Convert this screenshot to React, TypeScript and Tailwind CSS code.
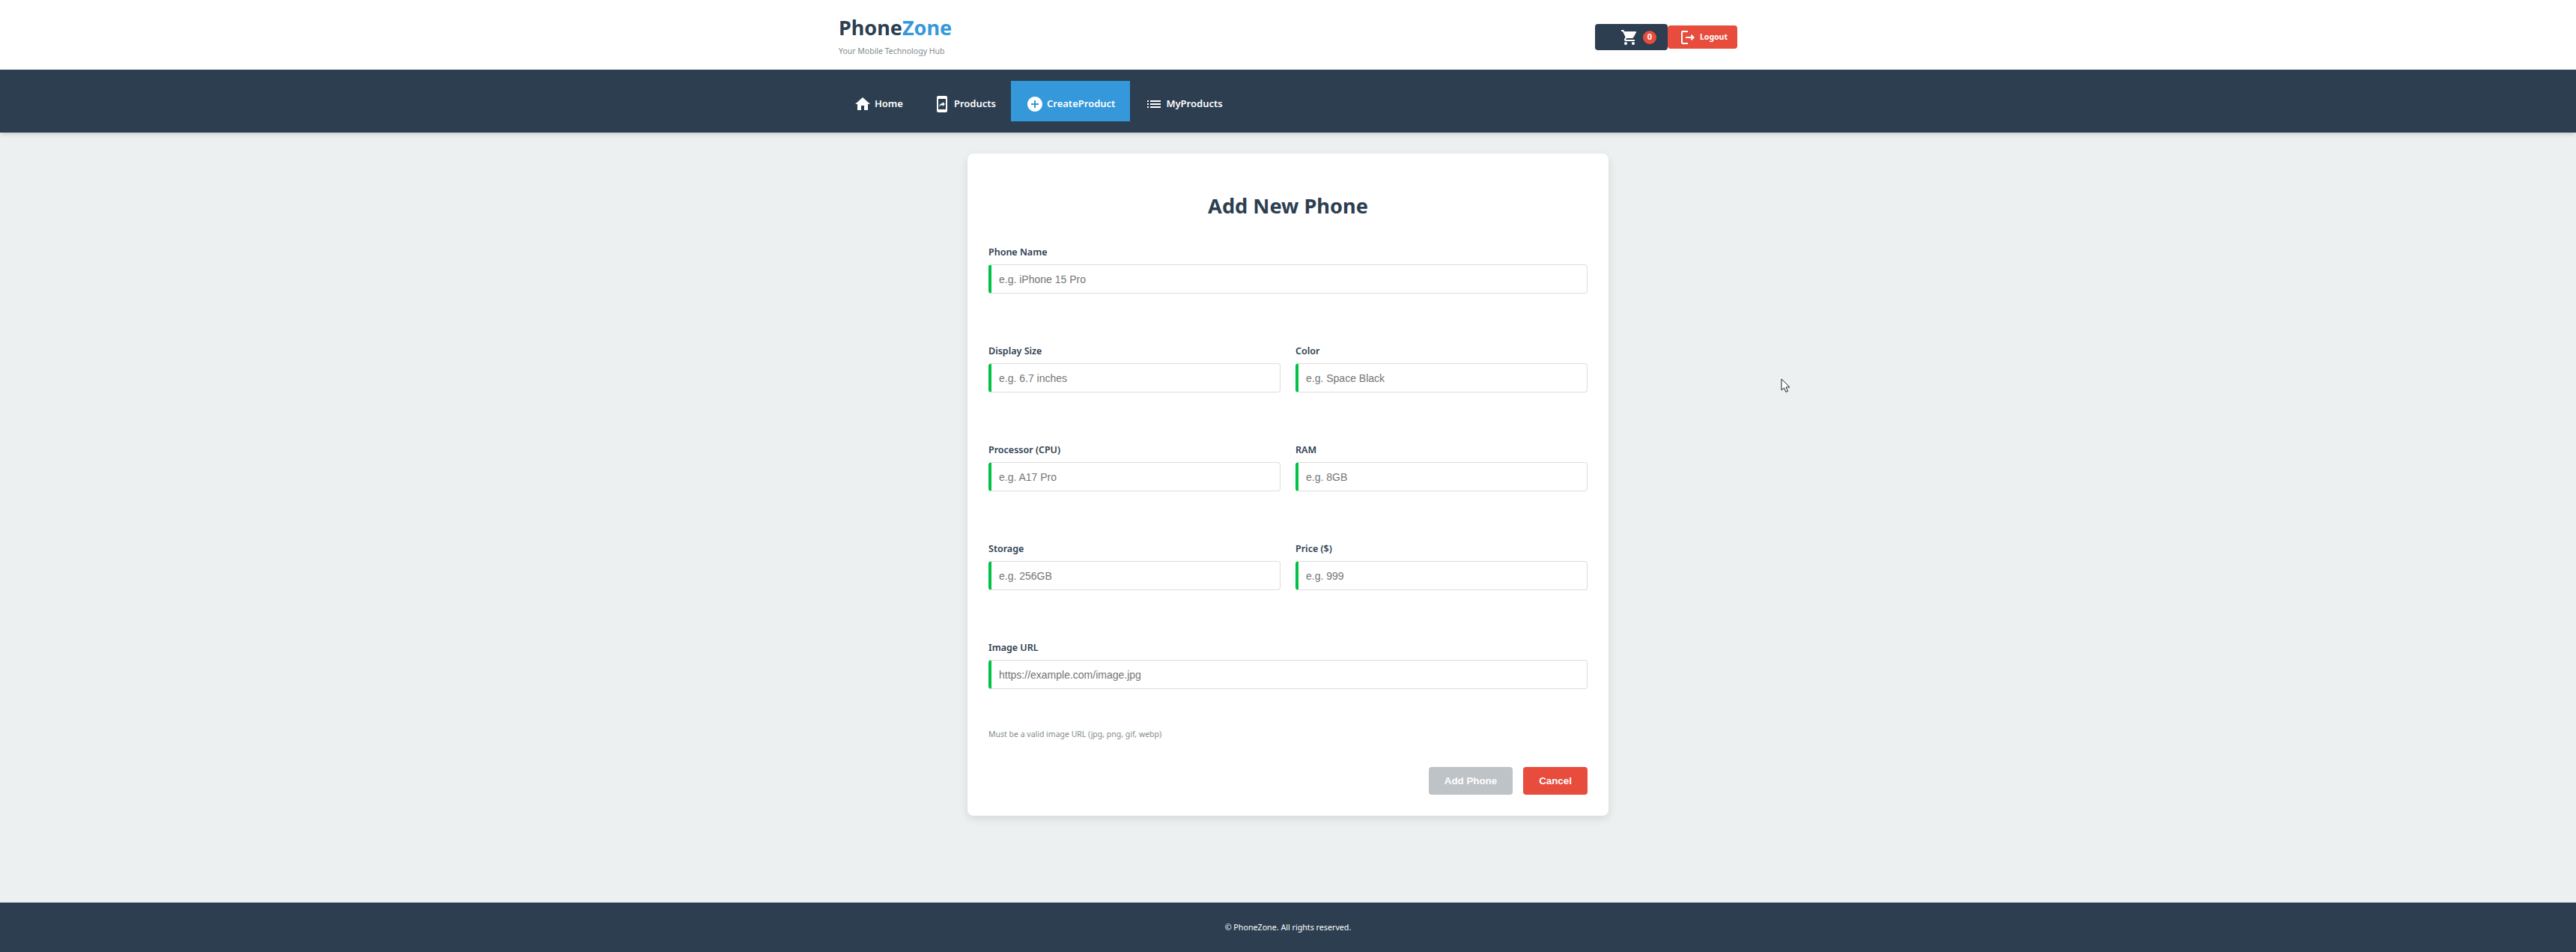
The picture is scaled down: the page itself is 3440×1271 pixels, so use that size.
import { MdAddCircle, MdHome, MdList, MdMobileScreenShare, MdOutlineLogout, MdShoppingCart } from "react-icons/md";

const uiFont = "font-['Noto_Sans','Open_Sans',sans-serif]";

function Field({ label, placeholder }: { label: string; placeholder: string }) {
  return (
    <div className="flex flex-1 flex-col">
      <label className="mb-[6px] text-[12.5px] font-semibold leading-[20px] text-[#2c3e50]">{label}</label>
      <input
        placeholder={placeholder}
        className="h-[39px] w-full rounded-[4px] border border-l-[4px] border-[#dddddd] border-l-[#00c244] bg-white px-[10px] font-['Liberation_Sans',sans-serif] text-[14px] outline-none placeholder:text-[#757575]"
      />
    </div>
  );
}

function NavItem({ icon, label, active }: { icon: React.ReactNode; label: string; active?: boolean }) {
  return (
    <a className={`flex h-[54px] items-center gap-[4px] px-[20px] pt-[8px] text-[13px] font-semibold text-white ${active ? "bg-[#3498db]" : ""}`}>
      {icon}
      {label}
    </a>
  );
}

export default function App() {
  return (
    <div className={`relative flex h-screen flex-col bg-[#ecf0f1] ${uiFont}`}>
      {/* Header */}
      <header className="h-[93px] bg-white">
        <div className="mx-auto flex h-full w-[1200px] items-center justify-between">
          <div>
            <h1 className="text-[27px] font-bold leading-[38px] text-[#2c3e50]">
              Phone<span className="text-[#3498db]">Zone</span>
            </h1>
            <p className="mt-[5px] text-[10.5px] leading-[14px] text-[#7f8c8d]">Your Mobile Technology Hub</p>
          </div>
          <div className="mt-[6px] flex items-center">
            <button className="flex h-[35px] w-[97px] items-center justify-end gap-[6px] rounded-[4px] bg-[#2c3e50] pr-[15px] text-white">
              <MdShoppingCart size={24} />
              <span className="flex h-[18px] w-[18px] items-center justify-center rounded-full bg-[#e74c3c] text-[11px] font-bold">0</span>
            </button>
            <button className="flex h-[31px] w-[93px] items-center justify-center gap-[4px] rounded-[4px] bg-[#e74c3c] pl-[2px] text-[10.5px] font-bold text-white">
              <MdOutlineLogout size={24} />
              Logout
            </button>
          </div>
        </div>
      </header>

      {/* Nav */}
      <nav className="h-[84px] bg-[#2c3e50] shadow-md">
        <div className="mx-auto flex h-full w-[1200px] items-center">
          <NavItem icon={<MdHome size={24} />} label="Home" />
          <NavItem icon={<MdMobileScreenShare size={24} />} label="Products" />
          <NavItem icon={<MdAddCircle size={24} />} label="CreateProduct" active />
          <NavItem icon={<MdList size={24} />} label="MyProducts" />
        </div>
      </nav>

      {/* Form */}
      <main className="flex-1 pt-[28px]">
        <div className="mx-auto h-[884px] w-[856px] rounded-[8px] bg-white px-[28px] pt-[51px] shadow-[0_4px_12px_rgba(0,0,0,0.1)]">
          <h2 className="mb-[33px] text-center text-[27.2px] font-bold leading-[38px] text-[#2c3e50]">Add New Phone</h2>
          <div className="flex flex-col gap-[67px]">
            <Field label="Phone Name" placeholder="e.g. iPhone 15 Pro" />
            <div className="flex gap-[20px]">
              <Field label="Display Size" placeholder="e.g. 6.7 inches" />
              <Field label="Color" placeholder="e.g. Space Black" />
            </div>
            <div className="flex gap-[20px]">
              <Field label="Processor (CPU)" placeholder="e.g. A17 Pro" />
              <Field label="RAM" placeholder="e.g. 8GB" />
            </div>
            <div className="flex gap-[20px]">
              <Field label="Storage" placeholder="e.g. 256GB" />
              <Field label="Price ($)" placeholder="e.g. 999" />
            </div>
            <Field label="Image URL" placeholder="https://example.com/image.jpg" />
          </div>
          <p className="mt-[52px] text-[10.5px] leading-[16px] text-[#7f8c8d]">Must be a valid image URL (jpg, png, gif, webp)</p>
          <div className="mt-[36px] flex justify-end gap-[14px] font-['Liberation_Sans',sans-serif]">
            <button disabled className="h-[37px] w-[112px] rounded-[4px] bg-[#bdc3c7] text-[13.33px] font-bold text-white">Add Phone</button>
            <button className="h-[37px] w-[86px] rounded-[4px] bg-[#e74c3c] text-[13.33px] font-bold text-white">Cancel</button>
          </div>
        </div>
      </main>

      {/* Footer */}
      <footer className="flex h-[66px] items-center justify-center bg-[#2c3e50] text-[10.7px] text-white">
        © PhoneZone. All rights reserved.
      </footer>

      {/* Mouse pointer */}
      <svg className="absolute left-[2378px] top-[505px]" width="14" height="20" viewBox="0 0 14 20">
        <path d="M1 1v15l3.5-3.2 2.4 5.6 2.6-1.1-2.4-5.4H12z" fill="#fff" stroke="#222" strokeWidth="1" />
      </svg>
    </div>
  );
}
